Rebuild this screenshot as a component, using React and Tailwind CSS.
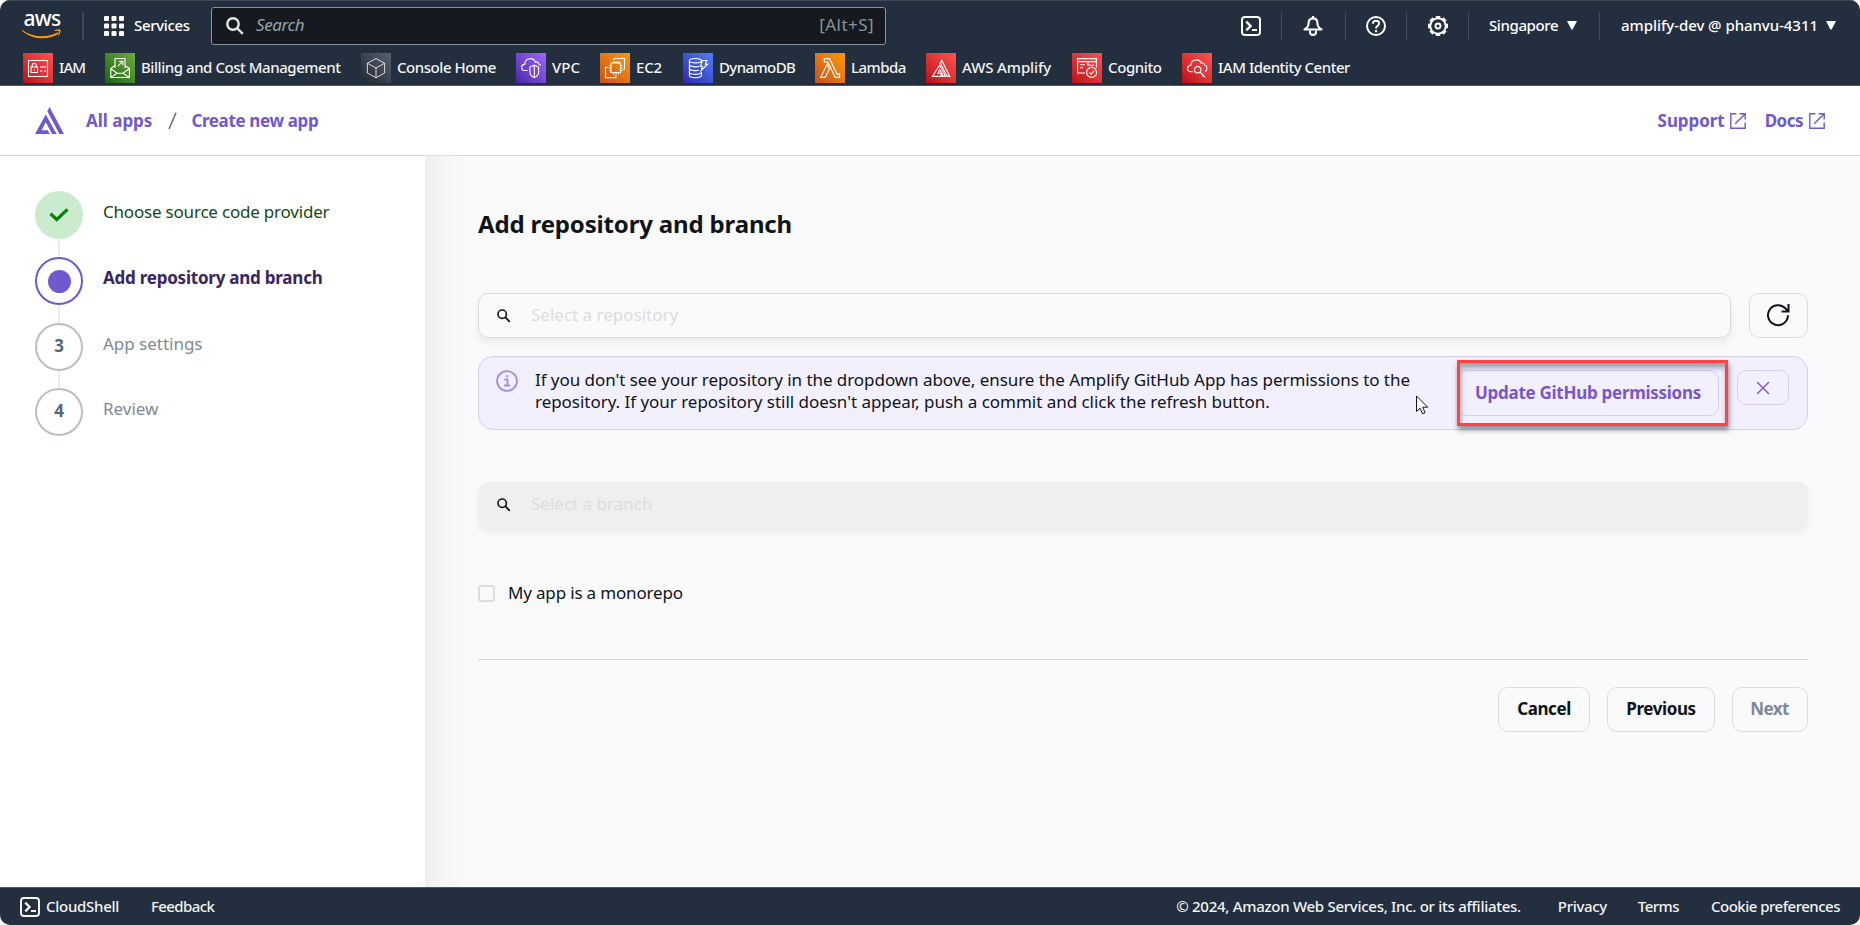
import { X } from "lucide-react";

const stroke = { fill: "none", stroke: "currentColor" };

function TerminalIcon() {
  return (
    <svg width="20" height="20" viewBox="0 0 20 20" {...stroke} strokeWidth="2">
      <rect x="1" y="1" width="18" height="18" rx="3" />
      <path d="M5.3 5.6 9.6 10l-4.3 4.4" strokeWidth="2.3" />
      <path d="M11 14h5" />
    </svg>
  );
}

function BellIcon() {
  return (
    <svg width="20" height="20" viewBox="0 0 20 20" {...stroke} strokeWidth="2.100" strokeLinejoin="round">
      <path d="M10 0v2.500" />
      <path d="M10 2.400c-3 0-4.400 2-4.400 4.600 0 2.800-1.400 4.900-4.100 6.500h17c-2.700-1.600-4.100-3.700-4.100-6.500 0-2.600-1.400-4.600-4.400-4.600Z" />
      <path d="M7 14.500v1.800c0 1.600 1.200 2.600 3 2.600s3-1 3-2.600v-1.800" />
    </svg>
  );
}

function HelpIcon() {
  return (
    <svg width="20" height="20" viewBox="0 0 20 20" {...stroke} strokeWidth="2">
      <circle cx="10" cy="10" r="9" />
      <path d="M6.9 7.8c0-1.9 1.3-3 3.1-3s3.1 1.1 3.1 2.7c0 2.3-3.1 2.3-3.1 5" />
      <path d="M10 14v2.2" strokeWidth="2.2" />
    </svg>
  );
}

function GearIcon() {
  const teeth = [0, 45, 90, 135, 180, 225, 270, 315];
  return (
    <svg width="20" height="20" viewBox="0 0 20 20" {...stroke} strokeWidth="2">
      <circle cx="10" cy="10" r="7.700" strokeWidth="1.900" />
      {teeth.map((a) => (
        <path key={a} d="M7.800 1h4.400" strokeWidth="2" transform={`rotate(${a} 10 10)`} />
      ))}
      <circle cx="10" cy="10" r="2.500" strokeWidth="1.900" />
    </svg>
  );
}

function Caret() {
  return (
    <svg width="10" height="9" viewBox="0 0 10 9" fill="#fff" className="-mt-px">
      <path d="M0 0h10L5.6 8.4h-1.2Z" />
    </svg>
  );
}

function MagnifierIcon() {
  return (
    <svg width="14" height="14" viewBox="0 0 14 14" {...stroke} strokeWidth="1.600">
      <circle cx="5.2" cy="5.2" r="4.2" />
      <path d="m8.2 8.2 4.600 4.600" strokeWidth="1.800" />
    </svg>
  );
}

function ExternalIcon() {
  return (
    <svg width="16" height="16" viewBox="0 0 16 16" {...stroke} strokeWidth="1.400" className="mt-px">
      <path d="M6.5.8H.8v14.400h14.400V9.500M9.500.8h5.700v5.700M15 1 5.200 10.800" />
    </svg>
  );
}

const services = [
  {
    name: "IAM", box: "w-[82px]", track: "tracking-[-0.9px]", tile: "from-[#bd0816] to-[#ff5252]",
    art: (
      <>
        <rect x="5.5" y="7.5" width="19" height="16" />
        <rect x="8" y="14" width="6.5" height="5.5" />
        <path d="M9.2 14v-1.6a2 2 0 0 1 4 0V14M11.2 16v1.5M17 14h6M17 18h2.5M21 18h2" />
      </>
    ),
  },
  {
    name: "Billing and Cost Management", box: "w-[256px]", track: "tracking-[-0.45px]", tile: "from-[#1b660f] to-[#6cae3e]",
    art: (
      <>
        <path d="M10 15V5.5h10V15" />
        <path d="M12.8 13.2 17.5 8.6M13.8 8.2h4v4" />
        <path d="M10 12.5 5.8 15.5v9h18.6v-9L20 12.5M5.8 15.5 12 20.2h6l6.4-4.7M6 24.4l6-4.2M24.2 24.4 18 20.2" />
      </>
    ),
  },
  {
    name: "Console Home", box: "w-[155px]", track: "tracking-[-0.45px]", tile: "from-[#1f2731] to-[#5a6270]",
    thin: true,
    art: <path d="m15 5.5 8.6 4.7v9.8L15 24.8 6.4 20v-9.8ZM6.4 10.2 15 15l8.6-4.8M15 15v9.8" />,
  },
  {
    name: "VPC", box: "w-[84px]", track: "tracking-[0px]", tile: "from-[#4d27a8] to-[#a166ff]",
    art: (
      <>
        <path d="M11.500 17.500H8.700c-4.300-.6-4-6.200.2-6.400.2-6.600 8.600-7.200 10.500-1.800 1.600-.8 3-.1 3.300 1.700 1 .2 1.600.7 2 1.500" />
        <path d="M18.300 12.200 22.600 14v5.200c0 2.400-1.800 4.200-4.300 5.400-2.600-1.200-4.400-3-4.400-5.400V14ZM18.300 12.200v12.400" />
      </>
    ),
  },
  {
    name: "EC2", box: "w-[83px]", track: "tracking-[-0.15px]", tile: "from-[#c8511b] to-[#ff9900]",
    art: (
      <>
        <rect x="11" y="10" width="9.5" height="9.5" />
        <path d="M13.5 8v2M16 8v2M18.5 8v2M13.5 19.5v2M16 19.5v2M18.5 19.5v2M9 12.5h2M9 15h2M9 17.5h2M20.5 12.5h2M20.5 15h2M20.5 17.5h2" />
        <path d="M14 7V5.500h10.500v11H23M8.500 14.500h-3v10.200h10.400v-2.500" />
      </>
    ),
  },
  {
    name: "DynamoDB", box: "w-[132px]", track: "tracking-[-0.6px]", tile: "from-[#2e27ad] to-[#527fff]",
    art: (
      <>
        <ellipse cx="12.4" cy="7.7" rx="6" ry="2.2" />
        <path d="M6.4 7.7v14.6c0 3.2 12 3.2 12 0v-3.5M18.4 7.7v2.5M6.4 11.5c0 2.2 7 3 10 1.7M6.4 15.2c0 2.2 6 3 9.5 2M6.4 19c0 2.6 8.5 3.2 11.5 1" />
        <path d="M19.5 7.5h4.3l-1.5 3.7h2.4l-6.5 6.3 1.2-4.3h-2Z" />
      </>
    ),
  },
  {
    name: "Lambda", box: "w-[111px]", track: "tracking-[-0.55px]", tile: "from-[#c8511b] to-[#ff9900]",
    art: (
      <path d="M5.6 24.4h4.6l4.2-8.6-2.2-4.5ZM9.3 5.6h5.2l7.5 15.5h2.6v3.3h-4.4L12.8 9H9.3Z" />
    ),
  },
  {
    name: "AWS Amplify", box: "w-[146px]", track: "tracking-[-0.1px]", tile: "from-[#bd0816] to-[#ff5252]",
    art: (
      <>
        <path d="M6.400 23.400h9.800l-1.600-3.200H12l1.800-3.800 3.600 7h2.200L13.800 12Z" />
        <path d="m14.300 10 1.500-2.600 8 16h-2.600Z" />
      </>
    ),
  },
  {
    name: "Cognito", box: "w-[110px]", track: "tracking-[-0.4px]", tile: "from-[#bd0816] to-[#ff5252]",
    art: (
      <>
        <path d="M13 20H5.600V5.600h18.800v9M5.600 8.600h18.800M8 11.800h5M8 14.800h3M16 8.600v3.700h6" />
        <circle cx="19.600" cy="19.400" r="5" />
        <path d="m17.400 19.400 1.700 1.800 3-3.400" />
      </>
    ),
  },
  {
    name: "IAM Identity Center", box: "w-[180px]", track: "tracking-[-0.48px]", tile: "from-[#bd0816] to-[#ff5252]",
    art: (
      <>
        <path d="M11 18.700H8.700c-4.300-.6-4-6.100.2-6.400.2-6.600 8.600-7 10.600-2 2-.7 3 .3 3.200 2 3 .5 3 5.400.3 6.200" />
        <circle cx="15.700" cy="16.700" r="3.200" />
        <path d="m18 19 5.300 5.300M20.300 23.300l1.700-1.700" />
      </>
    ),
  },
];

function Divider({ className }) {
  return <div className={`h-7 w-px shrink-0 bg-[#414d5c] ${className}`} />;
}

function TopNav() {
  return (
    <header className="h-[86px] shrink-0 border-t border-b border-t-[#3b4a53] border-b-[#4f5663] bg-[#232f3e] text-[15px] font-medium text-white">
      <div className="flex h-[49px] items-center">
        <div className="ml-[22px] flex w-[40px] flex-col items-center">
          <span className="h-[18px] text-[21px] leading-[12px] tracking-[-0.7px]">aws</span>
          <svg width="40" height="10" viewBox="0 0 40 10" className="-mt-px">
            <path d="M.6 1.2C10.500 8.300 24.500 9.200 35.600 3.600c1-.5 1.700.5.800 1.200C27 11.200 10.800 11.200.2 1.900c-.5-.5-.1-1 .4-.7Z" fill="#f90" />
            <path d="M32.700 1.300c1.800-1.200 5-1.100 5.700-.5.600.9-.2 4.500-1.800 6-.3.200-.6.100-.4-.3.500-1 1.300-3.600.8-4.200s-2.900-.5-4-.4c-.5 0-.6-.3-.3-.6Z" fill="#f90" />
          </svg>
        </div>
        <div className="ml-5 h-7 w-[2px] bg-[#414750]" />
        <svg width="20" height="20" viewBox="0 0 20 20" fill="#fff" className="ml-5">
          {[0, 7.5, 15].map((x) => [0, 7.5, 15].map((y) => <rect key={`${x}-${y}`} x={x} y={y} width="5" height="5" rx="1" />))}
        </svg>
        <span className="ml-[10px] w-[77px] tracking-[-0.35px]">Services</span>
        <div className="flex h-[38px] w-[675px] items-center rounded-[3px] border border-[#8d9596] bg-[#161920] pr-[11px] pl-[14px]">
          <svg width="18" height="18" viewBox="0 0 18 18" fill="none" stroke="#e3e6e6" strokeWidth="2.400">
            <circle cx="7" cy="7" r="5.700" />
            <path d="m11 11 5.800 5.800" />
          </svg>
          <span className="-mt-[2px] ml-[12px] text-[17px] font-normal tracking-[-0.4px] text-[#95a5a6] italic">Search</span>
          <span className="-mt-[2px] ml-auto text-[17px] font-normal tracking-[0.45px] text-[#879596]">[Alt+S]</span>
        </div>
        <div className="ml-[355px] flex items-center">
          <TerminalIcon />
          <Divider className="ml-5" />
          <span className="ml-[21px]"><BellIcon /></span>
          <Divider className="ml-[22px]" />
          <span className="ml-5"><HelpIcon /></span>
          <Divider className="ml-5" />
          <span className="ml-[21px]"><GearIcon /></span>
          <Divider className="ml-5" />
          <span className="ml-[20px] w-[78px] tracking-[-0.4px]">Singapore</span>
          <Caret />
          <Divider className="ml-[22px]" />
          <span className="ml-[21px] w-[205px] whitespace-nowrap tracking-[-0.05px]">amplify-dev @ phanvu-4311</span>
          <Caret />
        </div>
      </div>
      <nav className="mt-[3px] flex pl-[23px]">
        {services.map((s) => (
          <a key={s.name} className={`flex items-center gap-[6px] whitespace-nowrap ${s.box}`}>
            <span className={`size-[30px] shrink-0 bg-linear-to-tr ${s.tile}`}>
              <svg width="30" height="30" viewBox="0 0 30 30" fill="none" stroke="#fff" strokeWidth={s.thin ? 0.8 : 1.1}>{s.art}</svg>
            </span>
            <span className={`-mt-[2px] ${s.track} text-[#f2f3f3]`}>{s.name}</span>
          </a>
        ))}
      </nav>
    </header>
  );
}

function Breadcrumbs() {
  return (
    <div className="flex h-[70px] shrink-0 items-center border-b border-[#d5dbdb] bg-white text-[17px] font-bold text-[#7058cf]">
      <svg width="30" height="28" viewBox="0 0 30 28" fill="currentColor" className="ml-[35px]">
        <path d="M0 27 10.800 7.500l10.800 19.500h-4.500L10.800 15.300 6.600 23.200h6.200l2.100 3.800Z" />
        <path d="M12.300 4.200 14.500 0l14.500 27h-4.600Z" />
      </svg>
      <a className="ml-[21px] tracking-[-0.02px]">All apps</a>
      <svg width="9" height="18" viewBox="0 0 9 18" className="ml-4 mt-px" fill="none" stroke="#5f6b7a" strokeWidth="1.500">
        <path d="M8 .8 1 17" />
      </svg>
      <a className="ml-[14px] tracking-[-0.36px]">Create new app</a>
      <div className="ml-auto flex items-center pr-[35px]">
        <a className="flex items-center gap-[5px] tracking-[-0.07px]">Support <ExternalIcon /></a>
        <a className="ml-[19px] flex items-center gap-[6px] tracking-[-0.5px]">Docs <ExternalIcon /></a>
      </div>
    </div>
  );
}

function Steps() {
  const line = <div className="ml-[23px] w-[2px] flex-1 bg-[#ececec]" />;
  return (
    <aside className="flex w-[425px] shrink-0 flex-col bg-white pt-[35px] pl-[35px] text-[17px]">
      <div className="flex h-[66px]">
        <div className="flex w-12 flex-col">
          <div className="grid size-12 place-items-center rounded-full bg-[#caebcd]">
            <svg width="20" height="14" viewBox="0 0 20 14" fill="none" stroke="#06830c" strokeWidth="3.200">
              <path d="m1.500 5.800 6.300 5.700L18.500 1.300" />
            </svg>
          </div>
          {line}
        </div>
        <span className="mt-[8px] ml-[20px] tracking-[-0.2px] text-[#134a16]">Choose source code provider</span>
      </div>
      <div className="flex h-[66px]">
        <div className="flex w-12 flex-col">
          <div className="grid size-12 place-items-center rounded-full border-2 border-[#7058cf]">
            <div className="size-[23px] rounded-full bg-[#7058cf]" />
          </div>
          {line}
        </div>
        <span className="mt-[8px] ml-[20px] font-bold tracking-[-0.23px] text-[#362661]">Add repository and branch</span>
      </div>
      <div className="flex h-[65px]">
        <div className="flex w-12 flex-col">
          <div className="grid size-12 place-items-center rounded-full border-2 border-[#b9bec6] pb-[3px] font-bold text-[#56657a]">3</div>
          {line}
        </div>
        <span className="mt-[8px] ml-[20px] tracking-[-0.02px] text-[#7d8998]">App settings</span>
      </div>
      <div className="flex">
        <div className="grid size-12 place-items-center rounded-full border-2 border-[#b9bec6] pb-[3px] font-bold text-[#56657a]">4</div>
        <span className="mt-[8px] ml-[20px] text-[#7d8998]">Review</span>
      </div>
    </aside>
  );
}

function SearchField({ children, className }) {
  return (
    <div className={`flex items-center rounded-[10px] text-[17px] ${className}`}>
      <span className="mt-px text-[#0f141a]"><MagnifierIcon /></span>
      <span className="-mt-px ml-[20px] text-[#dcdddf]">{children}</span>
    </div>
  );
}

const outlineButton = "flex h-[45px] items-center justify-center rounded-[10px] border border-[#dcdddf] pb-[2px] text-[17px] font-bold";

function RepositoryForm() {
  return (
    <main className="flex flex-1 flex-col bg-[#fafafa] bg-linear-to-r from-[#eeeeee] via-[#f6f6f6] via-[18px] to-[#fafafa] to-[42px] pr-[52px] pl-[53px] text-[#0f141a]">
      <h1 className="mt-[50px] text-[24px] leading-9 font-bold tracking-[-0.16px]">Add repository and branch</h1>
      <div className="mt-[51px] flex gap-[18px]">
        <SearchField className="h-[45px] flex-1 border border-[#d8dadc] bg-[#fafafa] pl-[18px] shadow-[0_4px_8px_rgba(13,26,38,0.07)]">Select a repository</SearchField>
        <button className="grid h-[45px] w-[59px] place-items-center rounded-[10px] border border-[#dcdddf]">
          <svg width="24" height="24" viewBox="0 0 24 24" fill="none" stroke="currentColor" strokeWidth="2" className="-mt-px -ml-px">
            <path d="M22 12.300A10 10 0 1 1 19.300 5.300L22 8" />
            <path d="M22.500 1v7.500h-7" />
          </svg>
        </button>
      </div>
      <div className="relative mt-[18px] flex h-[74px] items-start rounded-[15px] border border-[#d5cdf7] bg-[#f2f0fe] pl-[17px]">
        <svg width="22" height="22" viewBox="0 0 22 22" fill="none" stroke="#a58be6" strokeWidth="1.800" className="mt-[13px]">
          <circle cx="11" cy="11" r="9.900" />
          <path d="M8.300 9.500h3.200v6M8 15.500h6.200" />
          <path d="M10.300 6.200h2" strokeWidth="2" />
        </svg>
        <p className="mt-[12px] ml-[17px] w-[920px] text-[17px] leading-[22px] whitespace-nowrap">
          <span className="tracking-[-0.055px]">If you don't see your repository in the dropdown above, ensure the Amplify GitHub App has permissions to the</span>
          <br />
          <span className="tracking-[-0.035px]">repository. If your repository still doesn't appear, push a commit and click the refresh button.</span>
        </p>
        <button className="mt-[13px] ml-[2px] h-[46px] w-[262px] rounded-[10px] border border-[#d5cdf7] pb-px text-[17px] font-bold tracking-[-0.28px] text-[#7a55c8]">
          Update GitHub permissions
        </button>
        <button className="mt-[13px] ml-[18px] grid h-[35px] w-[52px] place-items-center rounded-[9px] border border-[#d5cdf7] text-[#7a55c8]">
          <X size={22} strokeWidth={1.500} className="-ml-px" />
        </button>
        <div className="absolute top-[3px] left-[978px] h-[66px] w-[271px] border-[3px] border-[#ff4343] shadow-[1px_4px_5px_rgba(40,40,60,0.5),inset_1px_5px_5px_rgba(40,40,60,0.4)]" />
        <svg width="13" height="20" viewBox="0 0 13 20" className="absolute top-[38px] left-[937px]" fill="#fff" stroke="#15151f" strokeWidth="1">
          <path d="M.5 1v15.500l3.600-3.300 2.400 5.600 2.600-1.100-2.400-5.500h5Z" />
        </svg>
      </div>
      <SearchField className="mt-[52px] h-[48px] bg-[#efefef] pb-[3px] pl-[19px] shadow-[0_3px_8px_rgba(13,26,38,0.05)]">Select a branch</SearchField>
      <label className="mt-[51px] flex items-center">
        <span className="size-[17px] rounded-[3px] border-2 border-[#dcdddf]" />
        <span className="ml-[13px] text-[17px] leading-[24px] tracking-[-0.17px]">My app is a monorepo</span>
      </label>
      <div className="mt-[54px] h-px bg-[#d5d7d9]" />
      <div className="mt-[27px] flex justify-end">
        <button className={`${outlineButton} w-[92px] tracking-[-0.4px]`}>Cancel</button>
        <button className={`${outlineButton} ml-[17px] w-[108px] tracking-[-0.4px]`}>Previous</button>
        <button className={`${outlineButton} ml-[17px] w-[76px] pr-px tracking-[-0.6px] text-[#7d8998]`}>Next</button>
      </div>
    </main>
  );
}

function Footer() {
  return (
    <footer className="flex h-[38px] shrink-0 items-center border-t border-[#4f5663] bg-[#232f3e] pr-5 pl-5 text-[15px] font-medium whitespace-nowrap text-[#f2f3f3]">
      <TerminalIcon />
      <span className="ml-[6px] w-[105px] tracking-[-0.28px]">CloudShell</span>
      <span className="tracking-[-0.6px]">Feedback</span>
      <span className="ml-auto tracking-[-0.28px]">© 2024, Amazon Web Services, Inc. or its affiliates.</span>
      <span className="ml-[37px] tracking-[-0.33px]">Privacy</span>
      <span className="ml-[31px] tracking-[-0.55px]">Terms</span>
      <span className="ml-[32px] tracking-[-0.5px]">Cookie preferences</span>
    </footer>
  );
}

export default function App() {
  return (
    <div className="flex h-[925px] w-[1860px] flex-col overflow-hidden rounded-[10px] bg-white font-['Noto_Sans',sans-serif]">
      <TopNav />
      <Breadcrumbs />
      <div className="flex min-h-0 flex-1">
        <Steps />
        <RepositoryForm />
      </div>
      <Footer />
    </div>
  );
}
